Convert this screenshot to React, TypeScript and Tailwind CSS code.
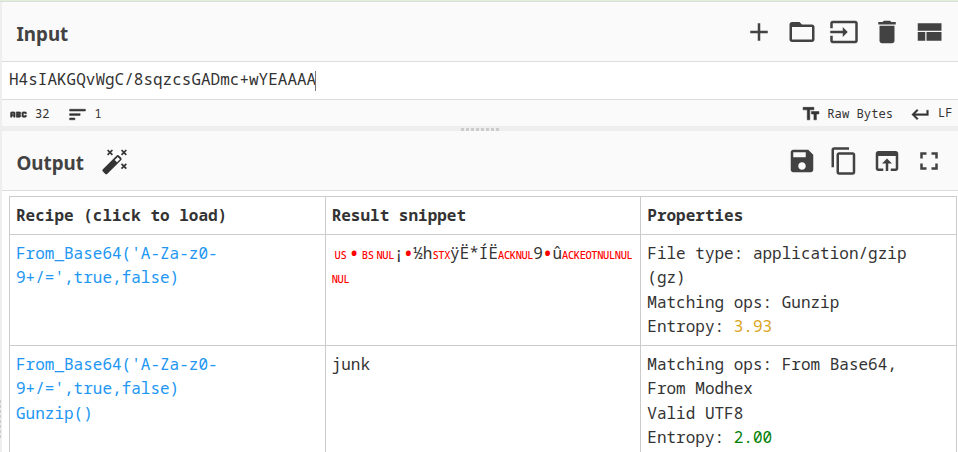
import React from 'react';

const ICONS = {
  add: 'M19 13h-6v6h-2v-6H5v-2h6V5h2v6h6v2z',
  folder:
    'M20 6h-8l-2-2H4c-1.1 0-1.99.9-1.99 2L2 18c0 1.1.9 2 2 2h16c1.1 0 2-.9 2-2V8c0-1.1-.9-2-2-2zm0 12H4V8h16v10z',
  input:
    'M21 3.01H3c-1.1 0-2 .9-2 2V9h2V4.99h18v14.03H3V15H1v4.01c0 1.1.9 1.98 2 1.98h18c1.1 0 2-.88 2-1.98v-14c0-1.11-.9-2-2-2zM11 16l4-4-4-4v3H1v2h10v3z',
  trash: 'M6 19c0 1.1.9 2 2 2h8c1.1 0 2-.9 2-2V7H6v12zM19 4h-3.5l-1-1h-5l-1 1H5v2h14V4z',
  layout: 'M3 19h6v-7H3v7zm7 0h12v-7H10v7zM3 5v6h19V5H3z',
  sort: 'M3 18h6v-2H3v2zM3 6v2h18V6H3zm0 7h12v-2H3v2z',
  abc: 'M21 11h-1.500v-.5h-2v3h2V13H21v1c0 .55-.45 1-1 1h-3c-.55 0-1-.45-1-1v-4c0-.55.45-1 1-1h3c.55 0 1 .45 1 1v1zM8 10v5H6.500v-1.500h-2V15H3v-5c0-.55.45-1 1-1h3c.55 0 1 .45 1 1zm-1.500.5h-2V12h2v-1.500zM13.500 12c.55 0 1 .45 1 1v1c0 .55-.45 1-1 1h-4V9h4c.55 0 1 .45 1 1v1c0 .55-.45 1-1 1zM11 10.500v.75h2v-.75h-2zm2 2.250h-2v.75h2v-.75z',
  textSize: 'M2.500 4v3h5v12h3V7h5V4h-13zm19 5h-9v3h3v7h3v-7h3V9z',
  enter: 'M19 7v4H5.830l3.580-3.590L8 6l-6 6 6 6 1.410-1.410L5.830 13H21V7z',
  save: 'M17 3H5c-1.110 0-2 .9-2 2v14c0 1.100.89 2 2 2h14c1.100 0 2-.9 2-2V7l-4-4zm-5 16c-1.660 0-3-1.340-3-3s1.340-3 3-3 3 1.340 3 3-1.340 3-3 3zm3-10H5V5h10v4z',
  copy: 'M16 1H4c-1.100 0-2 .9-2 2v14h2V3h12V1zm3 4H8c-1.100 0-2 .9-2 2v14c0 1.100.9 2 2 2h11c1.100 0 2-.9 2-2V7c0-1.100-.9-2-2-2zm0 16H8V7h11v14z',
  open: 'M19 4H5c-1.110 0-2 .9-2 2v12c0 1.100.89 2 2 2h4v-2H5V8h14v10h-4v2h4c1.100 0 2-.9 2-2V6c0-1.100-.89-2-2-2zm-7 6l-4 4h3v6h2v-6h3l-4-4z',
  full: 'M7 14H5v5h5v-2H7v-3zm-2-4h2V7h3V5H5v5zm12 7h-3v2h5v-5h-2v3zM14 5v2h3v3h2V5h-5z',
};

const STROKES: Partial<Record<keyof typeof ICONS, number>> = { abc: 0.7, sort: 0.6, textSize: 0.6, enter: 0.4 };

function Icon({ name, className = 'size-[30px]' }: { name: keyof typeof ICONS; className?: string }) {
  return (
    <svg
      viewBox="0 0 24 24"
      fill="currentColor"
      stroke="currentColor"
      strokeWidth={STROKES[name] ?? 0}
      className={`shrink-0 ${className}`}
    >
      <path d={ICONS[name]} />
    </svg>
  );
}

function Wand() {
  return (
    <svg viewBox="0 0 26 26" className="mt-[2px] ml-[18.500px] size-[26px] shrink-0 text-[#333]">
      <path
        fill="currentColor"
        fillRule="evenodd"
        d="M.9 20.300 14.500 6.700Q15.800 5.500 17.100 6.700L19 8.600Q20.200 9.900 19 11.200L5.400 24.800Q4.200 25.900 3.100 24.800L.9 22.600Q-.1 21.400.9 20.300zM12.700 10.900 15 13.200 18 10.200 15.700 7.900z"
      />
      <path
        fill="none"
        stroke="currentColor"
        strokeWidth="1.7"
        d="m5.600 1 4.800 4.800m0-4.800L5.600 5.800M19.500 1l4.800 4.800m0-4.800-4.800 4.800M19.500 14.800l4.800 4.800m0-4.800-4.800 4.800"
      />
    </svg>
  );
}

function Header({ title, icons, wand }: { title: string; icons: (keyof typeof ICONS)[]; wand?: boolean }) {
  return (
    <div className="flex h-full items-center border-b border-[#ddd] bg-[#fafafa] pr-[14px] pl-[14.500px] text-[#424242]">
      <h2 className="pt-[5px] font-['Noto_Sans',sans-serif] text-[18.800px] font-bold">{title}</h2>
      {wand && <Wand />}
      <div className="ml-auto flex gap-[12.500px]">
        {icons.map((n) => (
          <Icon key={n} name={n} />
        ))}
      </div>
    </div>
  );
}

const Ctl = ({ children }: { children: string }) => (
  <span className="inline-block w-[17.600px] text-center text-[10.400px] leading-none font-medium tracking-[-0.370px] text-[#f00]">
    {children}
  </span>
);
const Dot = () => (
  <span className="inline-flex h-[10px] w-[9.600px] items-center justify-center align-[-2px] text-[22px] leading-none text-[#f00]">
    •
  </span>
);

const cell = 'border border-[#ccc] px-[6px] pt-[6px] pb-0 align-top';
const link = 'text-[#2196f3]';

export default function App() {
  return (
    <div className="flex h-[452px] w-[958px] flex-col overflow-hidden bg-white font-['Noto_Sans_Mono','DejaVu_Sans_Mono',monospace] text-[16px] leading-[24.400px] text-[#333]">
      <div className="h-[2px] shrink-0 border-b border-[#ddd] bg-[#dff0d8]" />
      <div className="flex min-h-0 flex-1">
        <div className="flex w-[2px] shrink-0 flex-col justify-end bg-[#eee] pb-[14px]">
          <div className="flex flex-col gap-[2px]">
            {Array.from({ length: 8 }, (_, i) => (
              <div key={i} className="h-[3px] w-px bg-[#ccc]" />
            ))}
          </div>
        </div>
        <div className="flex min-w-0 flex-1 flex-col">
          <div className="h-[60px] shrink-0">
            <Header title="Input" icons={['add', 'folder', 'input', 'trash', 'layout']} />
          </div>
          <div className="flex h-[37px] shrink-0 items-center pb-[2px] pl-[7px]">
            <span>H4sIAKGQvWgC/8sqzcsGADmc+wYEAAAA</span>
            <span className="-mb-[2px] -ml-px h-5 w-px bg-[#777]" />
          </div>
          <div className="flex h-[27px] shrink-0 items-center border-t border-[#ddd] bg-[#fafafa] pt-[2px] pr-[5.500px] pl-[5.500px] text-[12px]">
            <Icon name="abc" className="size-[21px]" />
            <span className="ml-[6.500px]">32</span>
            <Icon name="sort" className="ml-[17.500px] size-[21px]" />
            <span className="ml-[6.500px]">1</span>
            <Icon name="textSize" className="ml-auto size-[20px]" />
            <span className="ml-[6.500px] text-[12.200px]">Raw Bytes</span>
            <Icon name="enter" className="ml-[17px] size-[21px]" />
            <span className="-mt-[2px] ml-[7px]">LF</span>
          </div>
          <div className="flex h-[5px] shrink-0 items-end justify-center gap-[2px] bg-[#eee]">
            {Array.from({ length: 8 }, (_, i) => (
              <div key={i} className="h-[3px] w-[3px] bg-[#ccc]" />
            ))}
          </div>
          <div className="h-[60px] shrink-0">
            <Header title="Output" icons={['save', 'copy', 'open', 'full']} wand />
          </div>
          <div className="pt-[5px] pl-[7px]">
            <table className="w-[948px] table-fixed border-collapse text-left">
              <thead>
                <tr className="h-[38px]">
                  <th className={cell}>Recipe (click to load)</th>
                  <th className={cell}>Result snippet</th>
                  <th className={cell}>Properties</th>
                </tr>
              </thead>
              <tbody>
                <tr className="h-[111px]">
                  <td className={`${cell} ${link}`}>
                    From_Base64('A-Za-z0-
                    <br />
                    9+/=',true,false)
                  </td>
                  <td className={`${cell} whitespace-nowrap`}>
                    <Ctl>US</Ctl><Dot /><Ctl>BS</Ctl><Ctl>NUL</Ctl>¡<Dot />½h<Ctl>STX</Ctl>ÿË*ÍË<Ctl>ACK</Ctl>
                    <Ctl>NUL</Ctl>9<Dot />û<Ctl>ACK</Ctl><Ctl>EOT</Ctl><Ctl>NUL</Ctl><Ctl>NUL</Ctl>
                    <br />
                    <Ctl>NUL</Ctl>
                  </td>
                  <td className={cell}>
                    File type: application/gzip
                    <br />
                    (gz)
                    <br />
                    Matching ops: Gunzip
                    <br />
                    Entropy: <span className="text-[#daa520]">3.93</span>
                  </td>
                </tr>
                <tr className="h-[111px]">
                  <td className={`${cell} ${link}`}>
                    From_Base64('A-Za-z0-
                    <br />
                    9+/=',true,false)
                    <br />
                    Gunzip()
                  </td>
                  <td className={cell}>junk</td>
                  <td className={cell}>
                    Matching ops: From Base64,
                    <br />
                    From Modhex
                    <br />
                    Valid UTF8
                    <br />
                    Entropy: <span className="text-[#008000]">2.00</span>
                  </td>
                </tr>
              </tbody>
            </table>
          </div>
        </div>
      </div>
    </div>
  );
}
